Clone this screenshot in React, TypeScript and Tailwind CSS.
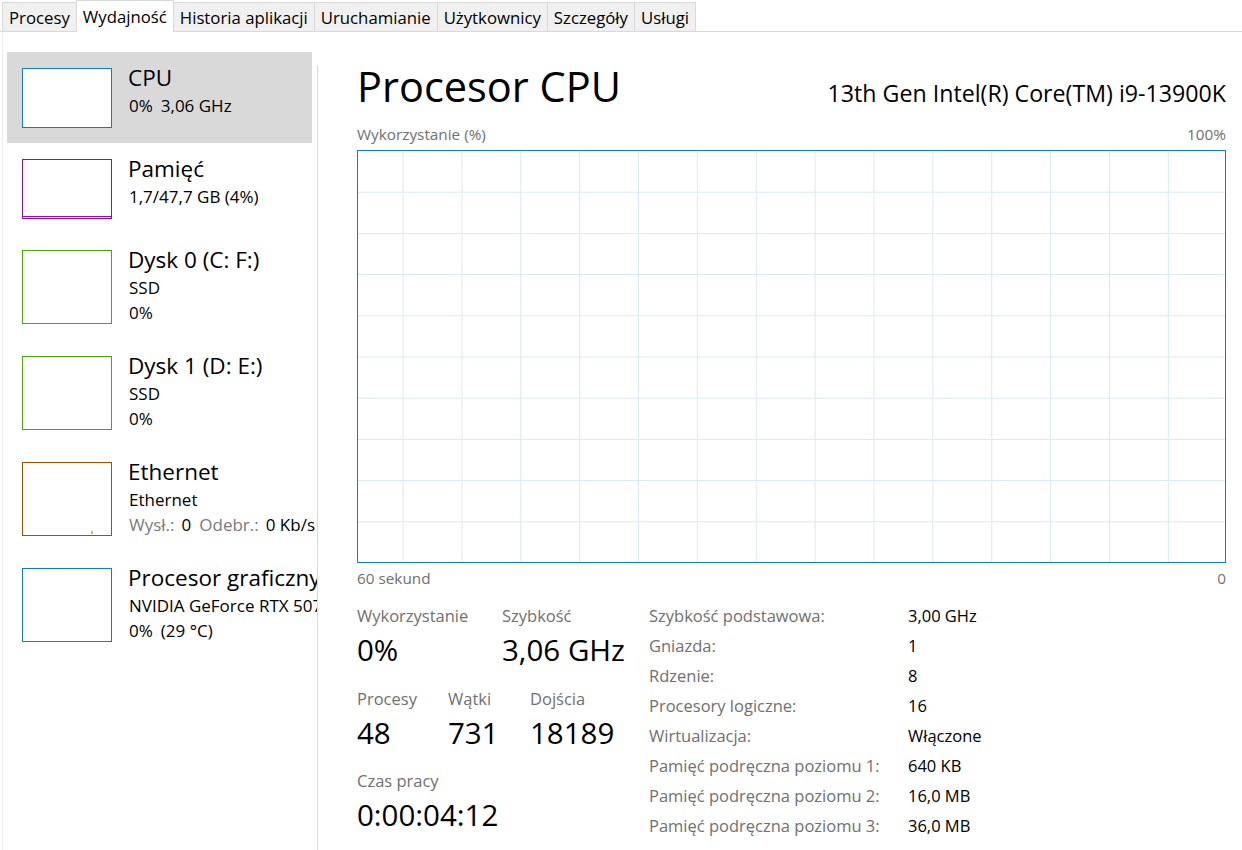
import React from "react";

const tabs = ["Procesy", "Wydajność", "Historia aplikacji", "Uruchamianie", "Użytkownicy", "Szczegóły", "Usługi"];

interface Item {
  title: string;
  lines: React.ReactNode[];
  color: string;
  tall: boolean;
  selected?: boolean;
  fill?: "mem" | "eth";
}

const items: Item[] = [
  {
    title: "CPU",
    lines: [
      <span key="c">
        0%<span className="ml-[8px]">3,06 GHz</span>
      </span>,
    ],
    color: "border-[#117dbb]",
    tall: false,
    selected: true,
  },
  { title: "Pamięć", lines: ["1,7/47,7 GB (4%)"], color: "border-[#8b12ae]", tall: false, fill: "mem" },
  { title: "Dysk 0 (C: F:)", lines: ["SSD", "0%"], color: "border-[#4da60c]", tall: true },
  { title: "Dysk 1 (D: E:)", lines: ["SSD", "0%"], color: "border-[#4da60c]", tall: true },
  {
    title: "Ethernet",
    lines: [
      "Ethernet",
      <span key="e">
        <span className="text-[#7a7a7a]">Wysł.:</span>
        <span className="ml-[7px]">0</span>
        <span className="ml-[8px] text-[#7a7a7a]">Odebr.:</span>
        <span className="ml-[7px]">0 Kb/s</span>
      </span>,
    ],
    color: "border-[#a74f01]",
    tall: true,
    fill: "eth",
  },
  {
    title: "Procesor graficzny",
    lines: [
      "NVIDIA GeForce RTX 5070",
      <span key="g">
        0%<span className="ml-[8px]">(29 °C)</span>
      </span>,
    ],
    color: "border-[#117dbb]",
    tall: true,
  },
];

const specs: [string, string][] = [
  ["Szybkość podstawowa:", "3,00 GHz"],
  ["Gniazda:", "1"],
  ["Rdzenie:", "8"],
  ["Procesory logiczne:", "16"],
  ["Wirtualizacja:", "Włączone"],
  ["Pamięć podręczna poziomu 1:", "640 KB"],
  ["Pamięć podręczna poziomu 2:", "16,0 MB"],
  ["Pamięć podręczna poziomu 3:", "36,0 MB"],
];

function SideItem({ item }: { item: Item }) {
  return (
    <div className={`flex w-[305px] pt-[16px] pb-[15px] pl-[15px] ${item.selected ? "bg-[#d9d9d9]" : ""}`}>
      <div
        className={`shrink-0 w-[90px] border bg-white flex flex-col justify-end ${item.color} ${item.tall ? "h-[74px]" : "h-[60px]"}`}
      >
        {item.fill === "mem" && <div className="h-[2px] border-t border-[#8b12ae] bg-[#f4e8f7]" />}
        {item.fill === "eth" && <div className="ml-[68px] mb-[1px] w-[2px] h-[3px] bg-[#e8a86a]" />}
      </div>
      <div className="ml-[16px] -mt-[6px] whitespace-nowrap text-black">
        <div className="text-[22.5px] leading-[31px]">{item.title}</div>
        {item.lines.map((l, i) => (
          <div key={i} className="text-[17px] leading-[25px] pl-[1px]">
            {l}
          </div>
        ))}
      </div>
    </div>
  );
}

function Chart() {
  const vx = Array.from({ length: 14 }, (_, i) => 45 + i * 58.8);
  const hy = Array.from({ length: 9 }, (_, i) => 41.2 * (i + 1));
  return (
    <div className="w-full h-[413px] border border-[#117dbb] bg-white">
      <svg width="100%" height="100%" viewBox="0 0 866 411" preserveAspectRatio="none">
        {vx.map((x) => (
          <line key={"v" + x} x1={x} y1={0} x2={x} y2={411} stroke="#d9eaf4" strokeWidth={1} />
        ))}
        {hy.map((y) => (
          <line key={"h" + y} x1={0} y1={y} x2={866} y2={y} stroke="#d9eaf4" strokeWidth={1} />
        ))}
      </svg>
    </div>
  );
}

function Stat({ label, value, className }: { label: string; value: string; className?: string }) {
  return (
    <div className={className}>
      <div className="text-[16.5px] leading-[31px] text-[#707070]">{label}</div>
      <div className="text-[29.5px] leading-[38px] text-black">{value}</div>
    </div>
  );
}

export default function App() {
  return (
    <div className="w-[1242px] h-[850px] bg-white overflow-hidden font-['Open_Sans','Noto_Sans',sans-serif] flex flex-col">
      {/* tabs */}
      <div className="flex items-end h-[32px] border-b border-[#d9d9d9] pl-[2px]">
        {tabs.map((t) => {
          const sel = t === "Wydajność";
          return (
            <div
              key={t}
              className={`px-[6px] text-[16.75px] text-black border border-b-0 -ml-[1px] first:ml-0 ${
                sel
                  ? "h-[32px] -mb-[1px] bg-white border-[#d9d9d9] leading-[32px] z-10"
                  : "h-[29px] bg-[#f0f0f0] border-[#d9d9d9] leading-[30px]"
              }`}
            >
              {t}
            </div>
          );
        })}
      </div>

      <div className="flex flex-1 min-h-0">
        {/* sidebar */}
        <div className="w-[318px] shrink-0 flex ml-[2px] border-l border-[#ececec]">
          <div className="w-[314px] overflow-hidden pt-[20px] pl-[4px]">
            {items.map((it) => (
              <SideItem key={it.title} item={it} />
            ))}
          </div>
          <div className="mt-[33px] border-l border-[#d9d9d9]" />
        </div>

        {/* main */}
        <div className="flex-1 pl-[37px] pr-[16px] pt-[26px]">
          <div className="flex items-baseline justify-between">
            <div className="text-[41.5px] leading-[56px] text-black">Procesor CPU</div>
            <div className="text-[23.2px] text-black">13th Gen Intel(R) Core(TM) i9-13900K</div>
          </div>
          <div className="mt-[10px] flex justify-between text-[15.3px] leading-[20px] text-[#707070]">
            <span>Wykorzystanie (%)</span>
            <span>100%</span>
          </div>
          <div className="mt-[6px]">
            <Chart />
          </div>
          <div className="mt-[5px] flex justify-between text-[15.3px] leading-[20px] text-[#707070]">
            <span>60 sekund</span>
            <span>0</span>
          </div>

          <div className="mt-[12px] flex">
            <div className="w-[292px] shrink-0">
              <div className="flex">
                <Stat label="Wykorzystanie" value="0%" className="w-[145px]" />
                <Stat label="Szybkość" value="3,06 GHz" />
              </div>
              <div className="flex mt-[14px]">
                <Stat label="Procesy" value="48" className="w-[91px]" />
                <Stat label="Wątki" value="731" className="w-[82px]" />
                <Stat label="Dojścia" value="18189" />
              </div>
              <div className="mt-[13px]">
                <Stat label="Czas pracy" value="0:00:04:12" />
              </div>
            </div>
            <div className="text-[16.5px] leading-[30px] mt-[1px]">
              {specs.map(([k, v]) => (
                <div key={k} className="flex">
                  <span className="w-[259px] text-[#707070]">{k}</span>
                  <span className="text-black">{v}</span>
                </div>
              ))}
            </div>
          </div>
        </div>
      </div>
    </div>
  );
}
